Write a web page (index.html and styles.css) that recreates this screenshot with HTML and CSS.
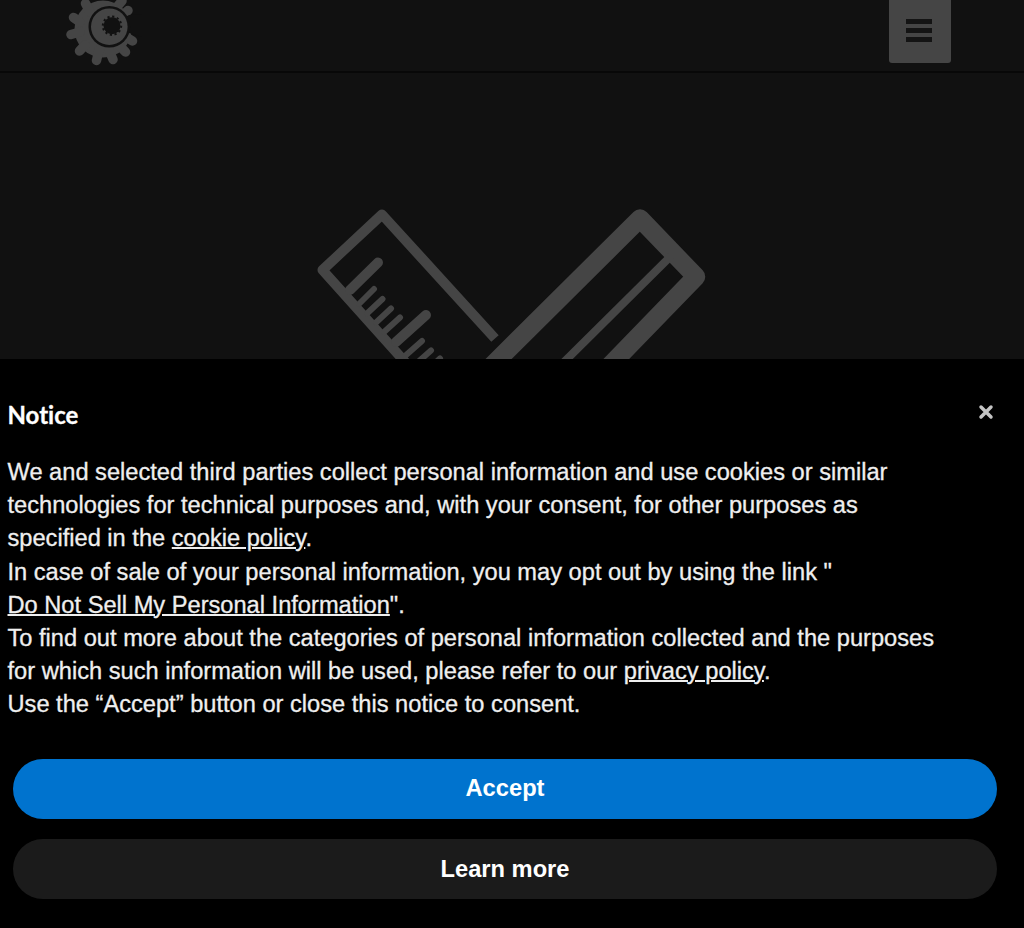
FILE: index.html
```html
<!DOCTYPE html>
<html lang="en">
<head>
    <meta charset="UTF-8">
    <meta name="viewport" content="width=device-width, initial-scale=1.0">
    <title>Notice</title>
    <link rel="stylesheet" href="styles.css">
</head>
<body>
    <header class="header">
        <svg class="logo" viewBox="62 0 80 72" width="80" height="72">
            <circle class="fill" cx="103" cy="29" r="28.500"/>
            <!-- teeth -->
            <path class="teeth" d="M80 32L71 34.500M85 45L79.500 51M99 50L96.500 60.500M109 50L113 59.500M118 44L125.500 52M126 37L132.500 41M121 17L128 10.500M116 8L122 1M90 12L85.500 3.500M80 22L73.500 17.500"/>
            <path class="dark" d="M109 26.500L129 15L142 14V37L129 33z"/>
            <circle class="dark" cx="109.300" cy="26.700" r="20.800"/>
            <circle class="fill" cx="109.300" cy="26.700" r="18.300"/>
            <circle class="dark" cx="112" cy="25.700" r="8.500"/>
            <circle class="hole" cx="112" cy="25.700" r="9.200"/>
        </svg>
        <button class="menu-toggle" aria-label="Menu">
            <span></span>
            <span></span>
            <span></span>
        </button>
    </header>

    <main class="hero">
        <svg viewBox="312 205 400 160" width="400" height="160">
            <!-- ruler -->
            <path class="ruler" d="M495 338.500L382 214.500L322.500 270L406 363"/>
            <path class="tick-big" d="M350 290L378 262.500M396 342L426 315"/>
            <path class="tick" d="M359 304L374 289M367 313.500L382.500 299M376 322.500L391 308.500M384 332L400 317.500M405 356L422 341M418 362L431 350.500M432 366L440 358.500"/>
            <!-- pencil -->
            <path class="pencil" d="M492 365.500L640 218.500L696 276.700L609.500 366"/>
            <path class="pencil-line" d="M671 256L561 365"/>
        </svg>
    </main>

    <div class="notice">
        <button class="close" aria-label="Close">
            <svg viewBox="0 0 16 16" width="16" height="16"><path d="M3 3L13 13M13 3L3 13"/></svg>
        </button>
        <h2>Notice</h2>
        <p>
            We and selected third parties collect personal information and use cookies or similar<br>
            technologies for technical purposes and, with your consent, for other purposes as<br>
            specified in the <a href="#">cookie policy</a>.<br>
            In case of sale of your personal information, you may opt out by using the link "<br>
            <a href="#">Do Not Sell My Personal Information</a>".<br>
            To find out more about the categories of personal information collected and the purposes<br>
            for which such information will be used, please refer to our <a href="#">privacy policy</a>.<br>
            Use the “Accept” button or close this notice to consent.
        </p>
        <div class="buttons">
            <button class="btn accept">Accept</button>
            <button class="btn">Learn more</button>
        </div>
    </div>
</body>
</html>
```
FILE: styles.css
```css
* {
    box-sizing: border-box;
}
body {
    margin: 0;
    height: 928px;
    overflow: hidden;
    display: flex;
    flex-direction: column;
    font-family: "Liberation Sans", Arial, sans-serif;
    background-color: #111;
    color: #efefef;
}
button {
    border: none;
    padding: 0;
    font-family: inherit;
    cursor: pointer;
}
svg {
    display: block;
}

/* Header */
.header {
    height: 73px;
    flex: none;
    display: flex;
    justify-content: space-between;
    align-items: flex-start;
    padding: 0 73px 0 62px;
    border-bottom: 2px solid #080808;
}
.logo .fill {
    fill: #454545;
}
.logo .dark {
    fill: #111;
}
.logo .teeth {
    fill: none;
    stroke: #454545;
    stroke-width: 9.5;
    stroke-linecap: round;
}
.logo .hole {
    fill: none;
    stroke: #111;
    stroke-width: 2;
    stroke-dasharray: 2.200 2.600;
}
.menu-toggle {
    width: 62px;
    height: 63px;
    display: flex;
    flex-direction: column;
    align-items: center;
    gap: 4px;
    padding: 19px 2px 0 0;
    background-color: #454545;
    border-radius: 0 0 3px 3px;
}
.menu-toggle span {
    width: 26px;
    height: 5px;
    background-color: #141414;
}

/* Hero */
.hero {
    height: 286px;
    flex: none;
    overflow: hidden;
    display: flex;
    justify-content: center;
    align-items: flex-start;
    padding-top: 132px;
}
.hero svg {
    flex: none;
}
.hero path {
    fill: none;
    stroke: #454545;
    stroke-linejoin: round;
}
.hero .ruler {
    stroke-width: 10;
}
.hero .tick-big {
    stroke-width: 10;
    stroke-linecap: round;
}
.hero .tick {
    stroke-width: 6;
    stroke-linecap: round;
}
.hero .pencil {
    stroke-width: 18.5;
}
.hero .pencil-line {
    stroke-width: 8;
}

/* Cookie notice */
.notice {
    position: relative;
    flex: 1;
    padding: 39px 27px 0 7.5px;
    background-color: #000;
}
.notice h2 {
    margin: 0 0 25px;
    font-family: Lato, sans-serif;
    font-size: 24px;
    line-height: 33px;
    font-variant-ligatures: none;
    color: #fff;
    -webkit-text-stroke: 0.3px #fff;
}
.notice p {
    margin: 0;
    font-size: 23.65px;
    line-height: 33.2px;
    white-space: nowrap;
    -webkit-text-stroke: 0.3px #efefef;
}
.notice a {
    color: inherit;
    text-decoration: underline;
    text-decoration-thickness: 2px;
}
.close {
    position: absolute;
    top: 45px;
    right: 30px;
    background: none;
}
.close path {
    fill: none;
    stroke: #c4c4c4;
    stroke-width: 3.5;
    stroke-linecap: round;
}
.buttons {
    display: flex;
    flex-direction: column;
    gap: 20px;
    margin: 37px 0 0 5.5px;
}
.btn {
    height: 60px;
    padding-top: 1px;
    border-radius: 30px;
    background-color: #1b1b1b;
    color: #fff;
    font-size: 23.7px;
    font-weight: bold;
}
.accept {
    padding: 0 0 1px;
    background-color: #0073ce;
}
```
